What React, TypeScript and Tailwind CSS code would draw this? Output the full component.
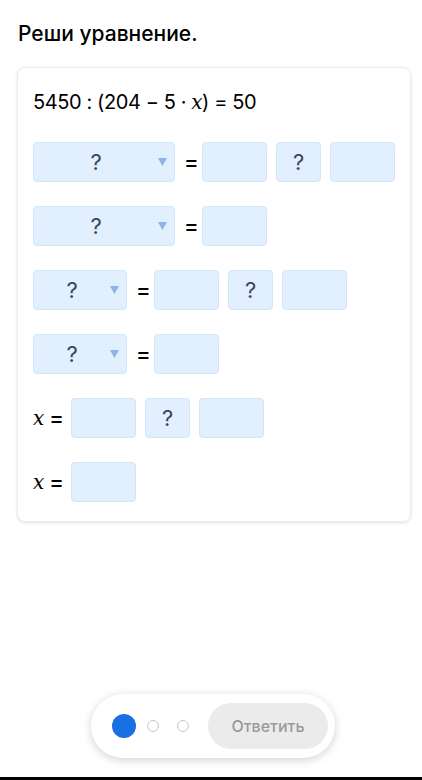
const Box = ({ w = 'w-[65px]', q = false }: { w?: string; q?: boolean }) => (
	<div
		className={`${w} shrink-0 h-10 rounded-[4px] bg-[#e1efff] border border-[#d3e5fa] flex items-center justify-center text-[22px] text-[#3b4656]`}
	>
		{q ? '?' : null}
	</div>
)

const Select = ({ w }: { w: string }) => (
	<div
		className={`${w} shrink-0 h-10 rounded-[4px] bg-[#e1efff] border border-[#d3e5fa] flex items-center text-[22px] text-[#3b4656]`}
	>
		<span className="flex-1 text-center">?</span>
		<svg width="9" height="8" viewBox="0 0 9 8" className="mr-[7px]">
			<path d="M0 0 H9 L4.5 8 Z" fill="#8cb6e3" />
		</svg>
	</div>
)

const Eq = () => <span className="w-[9px] text-center text-[22px] font-medium text-black leading-none">=</span>

const X = () => (
	<span className="italic text-[20px] leading-none" style={{ fontFamily: '"DejaVu Serif", "Liberation Serif", serif' }}>
		x
	</span>
)

export default function App() {
	return (
		<div
			className="min-h-[780px] flex flex-col bg-white text-black"
			style={{ fontFamily: 'Inter, "Noto Sans", sans-serif' }}
		>
			<h1 className="mt-[20px] ml-[18px] text-[21px] leading-[28px] font-medium">Реши уравнение.</h1>

			<div className="mt-[19px] ml-[17px] w-[394px] rounded-[8px] border border-[#ececec] shadow-[0_1px_3px_rgba(0,0,0,0.12)] pt-[20px] pb-[19px] px-[15px]">
				<div className="h-[28px] flex items-center text-[20px] tracking-[-0.4px]">
					5450 : (204 − 5 · <span className="ml-[5px]"><X /></span>) = 50
				</div>

				<div className="mt-[26px] flex flex-col gap-6">
					<div className="flex items-center gap-[9px]">
						<Select w="w-[142px]" />
						<Eq />
						<Box />
						<Box w="w-[45px]" q />
						<Box />
					</div>
					<div className="flex items-center gap-[9px]">
						<Select w="w-[142px]" />
						<Eq />
						<Box />
					</div>
					<div className="flex items-center gap-[9px]">
						<Select w="w-[94px]" />
						<Eq />
						<Box />
						<Box w="w-[45px]" q />
						<Box />
					</div>
					<div className="flex items-center gap-[9px]">
						<Select w="w-[94px]" />
						<Eq />
						<Box />
					</div>
					<div className="flex items-center gap-[9px]">
						<div className="flex items-center gap-[5px] w-[29px]">
							<X />
							<Eq />
						</div>
						<Box />
						<Box w="w-[45px]" q />
						<Box />
					</div>
					<div className="flex items-center gap-[9px]">
						<div className="flex items-center gap-[5px] w-[29px]">
							<X />
							<Eq />
						</div>
						<Box />
					</div>
				</div>
			</div>

			<div className="mt-auto mb-[19px] ml-[91px] w-[244px] h-[64px] rounded-full bg-white shadow-[0_2px_10px_rgba(0,0,0,0.18)] flex items-center pl-[21px] pr-[7px]">
				<div className="w-6 h-6 rounded-full bg-[#1a6fe3]" />
				<div className="ml-[11px] w-3 h-3 rounded-full border border-[#c8c8c8]" />
				<div className="ml-[18px] w-3 h-3 rounded-full border border-[#c8c8c8]" />
				<button className="ml-auto w-[120px] h-[46px] rounded-full bg-[#ebebeb] text-[#9a9a9a] text-[16px] font-medium">
					Ответить
				</button>
			</div>
			<div className="h-[3px] bg-black" />
		</div>
	)
}
